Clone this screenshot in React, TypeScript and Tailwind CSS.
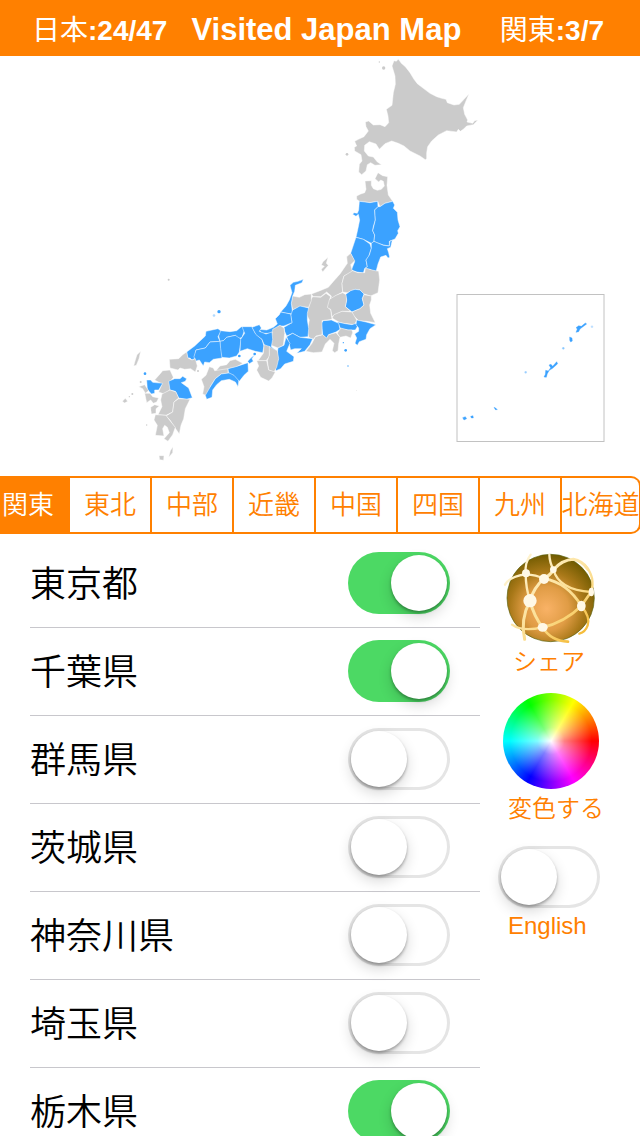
import { useState } from "react";

type Shape = { d: string; visited?: boolean };
type Dot = { x: number; y: number; r: number; visited?: boolean };
type Area = { name: string; transform: string; shapes: Shape[]; dots?: Dot[] };

const VISITED = "#3ba2ff";
const UNVISITED = "#cbcbcb";

const areas: Area[] = [
  {
    name: "hokkaido",
    transform: "translate(330 56) scale(0.33333)",
    shapes: [
      {
        d: "M205 9 L214 22 L226 32 L240 50 L252 70 L262 83 L280 97 L300 112 L320 122 L335 127 L348 130 L352 140 L372 147 L388 145 L402 130 L417 113 L408 135 L400 155 L404 175 L413 192 L411 198 L428 202 L434 194 L444 192 L430 206 L410 210 L400 220 L391 226 L385 220 L380 228 L350 224 L325 237 L305 255 L293 272 L290 290 L290 308 L286 311 L270 300 L240 285 L222 270 L205 262 L185 255 L165 263 L148 280 L138 264 L118 257 L104 268 L103 285 L115 300 L130 303 L142 318 L155 326 L135 328 L122 320 L112 326 L108 345 L95 356 L86 348 L88 325 L96 315 L93 296 L74 285 L73 274 L80 270 L74 256 L85 250 L102 242 L115 225 L108 212 L106 198 L116 195 L130 207 L150 206 L165 212 L176 200 L174 180 L169 160 L186 148 L190 110 L196 85 L195 60 L186 30 L192 14 L199 16 Z",
      },
    ],
    dots: [
      { x: 148, y: 18, r: 2 },
      { x: 161, y: 36, r: 5 },
      { x: 51, y: 295, r: 4 },
    ],
  },
  {
    name: "tohoku",
    transform: "translate(330 160) scale(0.33333)",
    shapes: [
      {
        d: "M80 108 L92 102 L104 98 L108 88 L105 63 L124 62 L124 76 L130 86 L142 91 L154 88 L163 78 L160 64 L152 60 L146 66 L135 56 L144 38 L158 47 L173 50 L171 76 L175 105 L188 124 L165 130 L150 140 L143 124 L118 128 L88 124 L80 118 Z",
      },
      {
        d: "M88 124 L105 126 L120 128 L143 124 L144 140 L134 150 L136 180 L130 200 L128 212 L134 225 L132 244 L124 250 L100 238 L78 232 L84 205 L89 180 L85 163 L78 169 L68 163 L72 158 L82 160 L86 150 Z",
        visited: true,
      },
      {
        d: "M150 140 L165 130 L188 124 L194 135 L190 145 L202 157 L204 180 L210 200 L203 212 L205 220 L195 237 L178 244 L178 258 L160 255 L140 248 L132 244 L134 225 L128 212 L136 180 L134 150 L144 140 Z",
        visited: true,
      },
      {
        d: "M78 232 L100 238 L120 252 L124 265 L116 290 L108 300 L112 320 L104 326 L100 339 L80 336 L64 330 L74 305 L62 280 Z",
        visited: true,
      },
      {
        d: "M124 250 L132 244 L160 256 L178 258 L180 244 L187 240 L182 262 L172 266 L176 278 L179 292 L174 294 L168 286 L152 291 L144 312 L138 335 L118 328 L104 326 L112 320 L108 300 L118 285 L124 265 Z",
        visited: true,
      },
    ],
  },
  {
    name: "kanto-chubu",
    transform: "translate(260 250) scale(0.33333)",
    shapes: [
      { d: "M204 22 L189 35 L184 45 L193 49 L184 58 L188 66 L205 46 L199 40 Z" },
      {
        d: "M272 10 L260 20 L262 40 L240 72 L222 92 L205 112 L180 122 L154 132 L160 140 L182 140 L200 126 L214 138 L212 148 L230 136 L248 126 L246 100 L252 78 L278 66 L272 44 L284 32 Z",
      },
      {
        d: "M278 62 L294 68 L314 68 L316 54 L336 60 L356 64 L359 90 L354 128 L332 138 L312 132 L300 120 L285 118 L262 128 L248 126 L246 100 L252 78 Z",
      },
      { d: "M285 118 L300 120 L312 132 L307 146 L312 165 L300 176 L276 186 L256 170 L260 150 L256 134 L272 122 Z", visited: true },
      { d: "M248 128 L258 134 L260 150 L256 170 L272 184 L246 184 L216 200 L212 178 L198 172 L202 152 L228 136 Z" },
      { d: "M312 134 L334 138 L334 150 L329 165 L332 190 L346 218 L320 214 L296 212 L278 194 L276 186 L300 176 L312 165 L307 146 Z" },
      { d: "M216 204 L222 194 L246 184 L276 186 L290 210 L284 224 L250 220 L236 216 Z" },
      { d: "M232 216 L256 221 L276 224 L288 220 L292 230 L286 240 L264 240 L242 236 Z", visited: true },
      { d: "M242 234 L264 240 L276 240 L278 248 L272 264 L258 258 L240 262 L232 250 Z" },
      { d: "M290 210 L318 216 L348 224 L330 236 L320 254 L318 268 L298 275 L292 286 L285 280 L290 264 L284 252 L296 244 L296 234 L288 224 Z", visited: true },
      { d: "M190 212 L214 210 L236 220 L240 238 L228 246 L206 254 L200 266 L188 254 L186 236 L184 220 Z", visited: true },
      { d: "M200 264 L206 254 L228 248 L240 262 L236 282 L234 302 L224 308 L217 302 L222 280 L210 268 L196 282 L186 306 L160 308 L138 304 L156 280 L166 260 L188 254 Z" },
      { d: "M158 140 L182 142 L198 130 L212 140 L208 150 L202 172 L212 180 L216 208 L186 212 L186 254 L168 258 L160 268 L146 262 L142 240 L148 210 L138 190 L146 172 L152 150 Z" },
      { d: "M98 138 L118 142 L134 134 L154 132 L154 152 L146 172 L120 170 L98 180 L94 160 Z" },
      { d: "M130 88 L126 98 L106 106 L104 124 L98 138 L94 160 L98 192 L80 190 L62 186 L78 168 L88 150 L96 128 L90 106 L100 97 L114 94 Z", visited: true },
      { d: "M98 180 L120 168 L146 174 L142 190 L142 210 L146 236 L144 260 L120 262 L98 250 L80 258 L74 244 L72 232 L96 218 L92 196 Z", visited: true },
      { d: "M62 186 L92 192 L96 218 L72 228 L56 228 L50 242 L30 250 L6 250 L-4 238 L20 240 L40 232 L52 222 L46 206 L58 194 Z", visited: true },
      { d: "M80 260 L98 250 L120 262 L158 266 L150 284 L134 304 L110 310 L124 296 L104 296 L92 300 L86 276 Z", visited: true },
      { d: "M38 238 L60 226 L72 234 L74 250 L70 286 L54 294 L34 286 L34 262 Z" },
      { d: "M54 294 L72 286 L78 262 L90 280 L80 304 L102 320 L100 334 L74 342 L62 356 L48 362 L42 346 L54 330 L52 310 Z", visited: true },
    ],
    dots: [
      { x: 257, y: 301, r: 4, visited: true },
      { x: 250, y: 278, r: 2, visited: true },
      { x: 264, y: 348, r: 2, visited: true },
      { x: 290, y: 422, r: 1 },
    ],
  },
  {
    name: "kansai-chugoku-shikoku",
    transform: "translate(160 290) scale(0.33333)",
    shapes: [
      { d: "M80 186 L104 168 L136 138 L138 124 L174 116 L184 124 L174 140 L180 154 L150 156 L136 174 L108 180 L104 206 L96 210 L90 204 L82 204 Z", visited: true },
      { d: "M182 122 L210 125 L230 122 L244 110 L256 114 L246 142 L236 146 L226 136 L200 142 L190 152 L180 154 L176 138 Z", visited: true },
      { d: "M180 154 L190 152 L200 142 L226 136 L244 148 L238 186 L230 198 L208 204 L184 202 L180 176 Z", visited: true },
      { d: "M108 180 L136 174 L150 156 L180 154 L182 176 L186 204 L160 208 L148 218 L134 216 L130 228 L118 210 L106 214 L102 200 Z", visited: true },
      { d: "M28 208 L56 206 L68 194 L80 186 L84 204 L96 210 L106 206 L112 228 L106 246 L92 236 L74 238 L60 234 L54 240 L30 234 Z" },
      { d: "M246 110 L276 110 L286 130 L306 148 L312 168 L308 188 L286 184 L262 176 L240 184 L242 148 L254 130 Z", visited: true },
      { d: "M276 112 L298 104 L304 114 L298 124 L318 132 L336 126 L338 148 L334 170 L352 184 L340 192 L328 176 L314 168 L306 148 L288 134 Z", visited: true },
      { d: "M312 164 L330 170 L328 200 L318 212 L294 212 L310 190 Z" },
      { d: "M328 170 L352 182 L356 206 L350 232 L342 246 L326 240 L322 212 L328 196 Z" },
      { d: "M290 212 L320 212 L326 240 L346 246 L336 264 L326 273 L302 262 L290 240 L296 228 Z" },
      { d: "M284 194 L276 206 L280 214 L268 221 L263 214 L272 204 Z", visited: true },
      { d: "M168 242 L180 228 L200 224 L210 212 L226 208 L248 220 L228 232 L206 236 L204 250 L184 250 Z" },
      { d: "M124 268 L138 256 L148 230 L160 234 L164 242 L204 236 L204 250 L184 252 L166 266 L152 288 L142 318 L128 312 L132 290 Z" },
      { d: "M150 292 L166 266 L184 252 L212 248 L238 262 L234 290 L226 276 L208 268 L184 272 L170 284 L158 300 L156 322 L140 328 L136 316 Z", visited: true },
      { d: "M204 236 L228 230 L264 218 L265 244 L252 256 L238 274 L222 256 L206 248 Z", visited: true },
    ],
    dots: [
      { x: 177, y: 65, r: 5, visited: true },
      { x: 238, y: 198, r: 4, visited: true },
      { x: 284, y: 192, r: 4, visited: true },
      { x: 114, y: 243, r: 3 },
      { x: 26, y: -31, r: 3 },
    ],
  },
  {
    name: "kyushu",
    transform: "translate(110 340) scale(0.33333)",
    shapes: [
      { d: "M150 102 L158 92 L180 90 L190 112 L180 126 L180 150 L162 162 L146 156 L156 132 L134 120 Z" },
      { d: "M110 120 L122 120 L128 127 L158 130 L146 150 L134 150 L134 160 L124 162 L112 148 Z", visited: true },
      { d: "M176 124 L194 116 L210 116 L218 109 L230 116 L226 124 L214 128 L236 144 L247 173 L230 178 L206 174 L196 154 L180 150 Z", visited: true },
      { d: "M86 140 L104 134 L116 152 L106 160 L98 146 Z" },
      { d: "M104 160 L120 160 L128 170 L146 174 L140 186 L130 190 L122 180 L110 188 Z" },
      { d: "M156 162 L180 150 L198 156 L206 174 L192 186 L188 216 L168 226 L144 224 L156 200 L152 180 Z" },
      { d: "M122 202 L134 194 L148 198 L138 206 L138 220 L124 222 Z" },
      { d: "M206 176 L240 178 L226 206 L221 236 L213 256 L208 282 L194 262 L180 240 L168 228 L188 216 L192 186 Z" },
      { d: "M136 224 L168 226 L180 242 L196 262 L188 284 L174 304 L162 296 L178 278 L172 262 L164 256 L158 266 L162 288 L136 286 L142 256 L132 240 Z" },
      { d: "M92 34 L81 44 L76 60 L71 78 L79 76 L87 56 Z" },
      { d: "M189 320 L181 332 L176 352 L188 338 Z" },
      { d: "M147 347 L162 347 L161 361 L149 359 Z" },
      { d: "M37 184 L46 175 L53 184 L44 189 Z" },
    ],
    dots: [
      { x: 105, y: 101, r: 4, visited: true },
      { x: 67, y: 162, r: 3 },
      { x: 58, y: 170, r: 2 },
      { x: 92, y: 126, r: 3 },
      { x: 110, y: 255, r: 2 },
      { x: 128, y: 210, r: 4 },
    ],
  },
];

const okinawaShapes = [
  "M378 142 L382 132 L378 128 L386 122 L394 124 L406 114 L410 117 L398 126 L390 132 L386 140 Z",
  "M359 156 L366 159 L367 168 L362 171 L359 166 Z",
  "M282 276 L286 268 L287 256 L295 258 L302 248 L297 240 L303 238 L308 244 L320 230 L323 236 L308 250 L298 256 L292 266 L289 277 Z",
  "M38 398 L46 395 L50 401 L42 405 Z",
  "M62 394 L69 392 L70 399 L64 399 Z",
  "M132 367 L137 369 L142 374 L136 374 Z",
];

function JapanMap() {
  return (
    <svg viewBox="0 56 640 420" className="block w-full shrink-0" role="img" aria-label="日本地図">
      {areas.map((area) => (
        <g key={area.name} transform={area.transform} stroke="#fff" strokeOpacity="0.8" strokeWidth="1.8" strokeLinejoin="round">
          {area.shapes.map((s) => (
            <path key={s.d} d={s.d} fill={s.visited ? VISITED : UNVISITED} />
          ))}
          {area.dots?.map((p) => (
            <circle key={`${p.x}-${p.y}`} cx={p.x} cy={p.y} r={p.r} fill={p.visited ? VISITED : UNVISITED} stroke="none" />
          ))}
        </g>
      ))}
      <circle cx="214" cy="315.5" r="1.3" fill={VISITED} opacity="0.4" />
      <rect x="457" y="294.5" width="147" height="147" fill="#fff" stroke="#c2c2c2" />
      <g transform="translate(450 285) scale(0.33333)" fill={VISITED} stroke={VISITED} strokeWidth="1">
        {okinawaShapes.map((d) => (
          <path key={d} d={d} />
        ))}
        <circle cx="340" cy="190" r="3" opacity="0.6" />
        <circle cx="227" cy="262" r="3" opacity="0.5" />
        <circle cx="426" cy="125" r="3" opacity="0.35" />
      </g>
    </svg>
  );
}

function GlobeIcon() {
  return (
    <svg viewBox="51 26 264 264" className="size-[88px] overflow-visible" aria-hidden="true">
      <defs>
        <radialGradient id="globe" gradientUnits="userSpaceOnUse" cx="170" cy="190" r="165">
          <stop offset="0" stopColor="#f9b266" />
          <stop offset="0.4" stopColor="#e09c45" />
          <stop offset="0.68" stopColor="#a87818" />
          <stop offset="1" stopColor="#6f5a00" />
        </radialGradient>
        <linearGradient id="thread" gradientUnits="userSpaceOnUse" x1="80" y1="60" x2="290" y2="290">
          <stop offset="0" stopColor="#fff3cf" />
          <stop offset="0.6" stopColor="#fbdc8c" />
          <stop offset="1" stopColor="#f3b322" />
        </linearGradient>
      </defs>
      <circle cx="182" cy="158" r="131" fill="url(#globe)" stroke="#5c6410" strokeWidth="2" />
      <g fill="none" stroke="url(#thread)" strokeLinecap="round" strokeWidth="7">
        <path d="M122 28 Q104 52 107 84 Q107 128 120 166" />
        <path d="M45 118 Q60 92 108 87 Q138 88 162 100" />
        <path d="M178 28 Q179 52 190 72" />
        <path d="M120 166 Q132 126 162 100 Q182 88 192 72 Q216 44 250 42 Q276 46 294 72" strokeWidth="9" />
        <path d="M284 58 Q318 96 303 140" />
        <path d="M190 72 Q206 134 303 140" />
        <path d="M162 100 Q232 112 274 182" strokeWidth="8" />
        <path d="M303 140 L274 182" strokeWidth="8" />
        <path d="M274 182 Q222 232 158 246" strokeWidth="8" />
        <path d="M274 182 Q302 216 293 240 Q286 260 268 265" />
        <path d="M120 166 Q132 214 158 246" strokeWidth="9" />
        <path d="M120 166 Q90 224 104 282" strokeWidth="9" />
        <path d="M66 238 Q96 260 158 246" />
        <path d="M158 246 Q182 286 234 289" strokeWidth="8" />
      </g>
      <g fill="#fff8e6">
        <circle cx="108" cy="84" r="12" />
        <circle cx="190" cy="73" r="10" />
        <circle cx="162" cy="101" r="15" />
        <circle cx="120" cy="166" r="20" />
        <ellipse cx="304" cy="140" rx="8" ry="13" />
        <ellipse cx="274" cy="182" rx="13" ry="16" />
        <ellipse cx="158" cy="246" rx="15" ry="13" />
      </g>
    </svg>
  );
}

function Toggle({ id, checked, onChange }: { id: string; checked: boolean; onChange: () => void }) {
  return (
    <input
      id={id}
      type="checkbox"
      role="switch"
      checked={checked}
      onChange={onChange}
      className="block h-[62px] w-[102px] shrink-0 cursor-pointer appearance-none rounded-full bg-white p-[3px] shadow-[inset_0_0_0_3px_#e5e5e5] transition-colors before:block before:size-14 before:rounded-full before:bg-white before:shadow-[0_2px_3px_rgba(0,0,0,0.3),0_6px_14px_rgba(0,0,0,0.16)] before:transition-transform checked:bg-[#4cd964] checked:shadow-none checked:before:translate-x-10"
    />
  );
}

const regions = ["関東", "東北", "中部", "近畿", "中国", "四国", "九州", "北海道"];

const initialPrefectures = [
  { name: "東京都", visited: true },
  { name: "千葉県", visited: true },
  { name: "群馬県", visited: false },
  { name: "茨城県", visited: false },
  { name: "神奈川県", visited: false },
  { name: "埼玉県", visited: false },
  { name: "栃木県", visited: true },
];

export default function App() {
  const [region, setRegion] = useState("関東");
  const [prefectures, setPrefectures] = useState(initialPrefectures);
  const [english, setEnglish] = useState(false);

  const toggle = (name: string) =>
    setPrefectures((list) => list.map((p) => (p.name === name ? { ...p, visited: !p.visited } : p)));

  return (
    <div className="flex h-screen flex-col overflow-hidden bg-white font-['Liberation_Sans','Noto_Sans_CJK_JP',sans-serif] text-black">
      <header className="flex h-14 shrink-0 items-center bg-[#ff8000] pt-1 pr-9 pl-8 whitespace-nowrap text-white">
        <p className="pt-0.5 text-[28px] leading-8">
          日本<span className="font-bold">:24/47</span>
        </p>
        <h1 className="ml-6 text-[31px] leading-8 font-bold">Visited Japan Map</h1>
        <p className="ml-auto pt-0.5 text-[28px] leading-8">
          関東<span className="font-bold">:3/7</span>
        </p>
      </header>

      <JapanMap />

      <nav className="shrink-0 overflow-hidden">
        <div className="-mr-px -ml-3 grid h-[58px] grid-cols-[repeat(7,minmax(0,82fr))_minmax(0,77fr)] overflow-hidden rounded-[10px] border-y-2 border-r-2 border-[#ff8000]">
          {regions.map((r) => (
            <button
              key={r}
              type="button"
              aria-pressed={r === region}
              onClick={() => setRegion(r)}
              className="flex items-center justify-center border-r-2 border-[#ff8000] text-[26px] leading-8 font-[350] whitespace-nowrap text-[#ff8000] last:border-r-0 aria-pressed:bg-[#ff8000] aria-pressed:text-white"
            >
              {r}
            </button>
          ))}
        </div>
      </nav>

      <main className="flex min-h-0 flex-1 pt-1.5">
        <ul className="min-w-0 flex-1 overflow-y-auto pl-[30px] [scrollbar-width:none]">
          {prefectures.map((p) => (
            <li key={p.name} className="flex h-22 items-center justify-between border-b border-[#c8c7cc] pr-[30px] pb-px">
              <label htmlFor={p.name} className="pt-1 text-[36px] leading-12 font-[350]">
                {p.name}
              </label>
              <Toggle id={p.name} checked={p.visited} onChange={() => toggle(p.name)} />
            </li>
          ))}
        </ul>

        <aside className="flex w-40 shrink-0 flex-col items-start pt-3.5 pl-[18px] text-2xl leading-10 font-[350] text-[#ff8000]">
          <button type="button" className="flex flex-col items-start pl-[9px]">
            <GlobeIcon />
            <span className="pl-1.5">シェア</span>
          </button>
          <button type="button" className="mt-[11px] flex flex-col items-start pl-[5px]">
            <span className="size-24 rounded-full bg-[radial-gradient(circle,#fff_0%,#ffffff80_20%,#ffffff00_60%),conic-gradient(from_90deg,#f00,#f0f,#00f,#0ff,#0f0,#ff0,#f00)]" />
            <span className="pl-[5px]">変色する</span>
          </button>
          <div className="mt-[17px] flex flex-col items-start">
            <Toggle id="english" checked={english} onChange={() => setEnglish(!english)} />
            <label htmlFor="english" className="pl-[10px] leading-9">
              English
            </label>
          </div>
        </aside>
      </main>
    </div>
  );
}
